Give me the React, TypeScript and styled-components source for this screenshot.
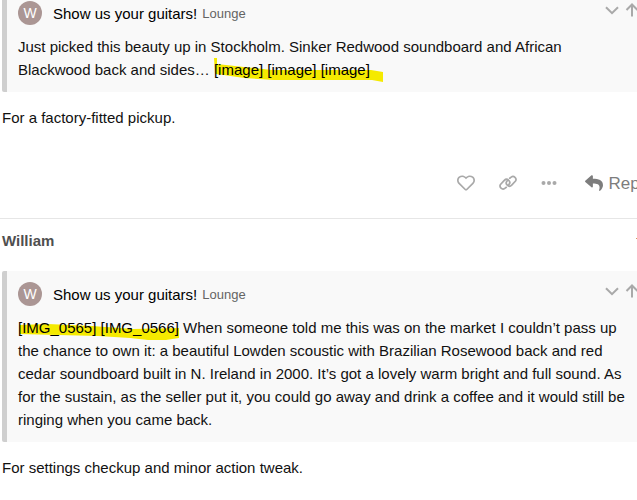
import React from "react";
import styled, { createGlobalStyle } from "styled-components";

const GlobalStyle = createGlobalStyle`
  * { box-sizing: border-box; }
  body {
    margin: 0;
    background: #fff;
    color: #111;
    font-family: "Liberation Sans", Arial, sans-serif;
    font-size: 15px;
    line-height: 23px;
    overflow: hidden;
  }
`;

const Stream = styled.main`
  padding-left: 2px;
  margin-top: -10px;
`;

const Post = styled.article<{ $divided?: boolean }>`
  border-top: ${(p) => (p.$divided ? "1px solid #e6e6e6" : "none")};
  padding-top: ${(p) => (p.$divided ? "10px" : "0")};
  margin-left: -2px;
  padding-left: 2px;
`;

const AuthorRow = styled.header`
  display: flex;
  justify-content: space-between;
  margin-bottom: 19px;
`;

const Author = styled.a`
  color: #4f4f4f;
  font-weight: bold;
  text-decoration: none;
`;

const EditMark = styled.span`
  width: 1px;
  height: 1px;
  margin-top: 9px;
  background: #d99a5b;
`;

const Quote = styled.aside`
  border-left: 5px solid #cfcfcf;
  border-radius: 2px 0 0 2px;
  background: #f9f9f9;
  padding: 11px 8px 11px 11px;
`;

const QuoteHeader = styled.div`
  display: flex;
  align-items: center;
  height: 24px;
  margin-bottom: 10px;
`;

const Avatar = styled.span`
  display: flex;
  align-items: center;
  justify-content: center;
  width: 24px;
  height: 24px;
  margin-right: 11px;
  border-radius: 50%;
  background: #ab9694;
  color: #fff;
  font-size: 14px;
`;

const Topic = styled.a`
  color: #000;
  text-decoration: none;
`;

const Category = styled.a`
  margin: 1px auto 0 5px;
  color: #646464;
  font-size: 13px;
  text-decoration: none;
`;

const QuoteControls = styled.div`
  display: flex;
  gap: 6px;
  margin: -6px -10px 0 0;
`;

const IconButton = styled.button`
  display: flex;
  align-items: center;
  border: 0;
  padding: 0;
  background: none;
  color: #a9a9a9;
  font: inherit;
`;

const QuoteBody = styled.blockquote`
  margin: 0;
`;

const Marked = styled.span`
  position: relative;
  z-index: 0;
  white-space: nowrap;
  color: #000;
`;

const Marker = styled.svg`
  position: absolute;
  left: 0;
  top: -4px;
  z-index: -1;
  overflow: visible;
  fill: #f5ea00;
`;

const Note = styled.p`
  margin: 14px 0;
`;

const Actions = styled.nav`
  display: flex;
  align-items: center;
  justify-content: flex-end;
  height: 32px;
  margin: 38px -15px 19px 0;

  button + button { margin-left: 24px; }
`;

const ReplyButton = styled(IconButton)`
  color: #7d7d7d;
  font-size: 17px;
  gap: 6px;

  && { margin-left: 28px; }
`;

const Chevron = () => (
  <svg width="14" height="14" viewBox="0 0 14 14" fill="none" stroke="currentColor" strokeWidth="2">
    <path d="M1 4.2 7 10.2 13 4.2" />
  </svg>
);

const ArrowUp = () => (
  <svg width="14" height="14" viewBox="0 0 14 14" fill="none" stroke="currentColor" strokeWidth="2">
    <path d="M7 13.5V1.5M1.5 7 7 1.5 12.5 7" />
  </svg>
);

const Heart = () => (
  <svg width="18" height="16" viewBox="0 20 512 472" preserveAspectRatio="none" fill="currentColor">
    <path d="M458.4 64.3C400.6 15.7 311.3 23 256 79.3 200.7 23 111.4 15.6 53.6 64.3-21.6 127.6-10.6 230.8 43 285.5l175.4 178.7c10 10.2 23.4 15.9 37.6 15.9 14.3 0 27.6-5.6 37.6-15.8L469 285.6c53.5-54.7 64.7-157.9-10.6-221.3zm-23.6 187.5L259.4 430.5c-2.4 2.4-4.4 2.4-6.8 0L77.2 251.8c-36.5-37.2-43.9-107.6 7.3-150.7 38.9-32.7 98.9-27.8 136.5 10.5l35 35.7 35-35.7c37.8-38.5 97.8-43.2 136.5-10.6 51.1 43.1 43.5 113.9 7.3 150.8z" />
  </svg>
);

const Link = () => (
  <svg width="18" height="16" viewBox="0 0 18 16" fill="none" stroke="currentColor" strokeWidth="1.7" strokeLinecap="round">
    <path d="M7.3 12.3 5.8 13.4A3 3 0 0 1 1.5 9.4L5.3 5.4A3.1 3.1 0 0 1 9.8 9.7L9.2 10.4" />
    <path d="M10.7 3.2 12.2 2.1A3 3 0 0 1 16.5 6.1L12.7 10.1A3.1 3.1 0 0 1 8.2 5.8L8.8 5.1" />
  </svg>
);

const Dots = () => (
  <svg width="16" height="16" viewBox="0 0 16 16" fill="currentColor">
    <circle cx="2.5" cy="8" r="2" />
    <circle cx="8" cy="8" r="2" />
    <circle cx="13.5" cy="8" r="2" />
  </svg>
);

const ReplyIcon = () => (
  <svg width="18" height="18" viewBox="0 0 512 512" fill="currentColor">
    <path d="M8.309 189.836L184.313 37.851C199.719 24.546 224 35.347 224 56.015v80.053c160.629 1.839 288 34.032 288 186.258 0 61.441-39.581 122.309-83.333 154.132-13.653 9.931-33.111-2.533-28.077-18.631 45.344-145.012-21.507-183.51-176.59-185.742V360c0 20.7-24.3 31.453-39.687 18.164l-176.004-152c-11.071-9.562-11.086-26.753 0-36.328z" />
  </svg>
);

function LoungeQuote({ children }: { children: React.ReactNode }) {
  return (
    <Quote>
      <QuoteHeader>
        <Avatar>W</Avatar>
        <Topic href="#topic">Show us your guitars!</Topic>
        <Category href="#lounge">Lounge</Category>
        <QuoteControls>
          <IconButton aria-label="Expand quote"><Chevron /></IconButton>
          <IconButton aria-label="Go to quoted post"><ArrowUp /></IconButton>
        </QuoteControls>
      </QuoteHeader>
      <QuoteBody>{children}</QuoteBody>
    </Quote>
  );
}

export default function App() {
  return (
    <>
      <GlobalStyle />
      <Stream>
        <Post>
          <LoungeQuote>
            Just picked this beauty up in Stockholm. Sinker Redwood soundboard and African
            Blackwood back and sides…{" "}
            <Marked>
              <Marker width="170" height="28" viewBox="0 0 170 28" aria-hidden="true">
                <path d="M0 1 3 1 3 7 30 10 58 13 110 13 157 13 169 15 169 25 158 23 120 23 60 23 30 21 10 18 1 17Z" />
              </Marker>
              [image] [image] [image]
            </Marked>
          </LoungeQuote>
          <Note>For a factory-fitted pickup.</Note>
          <Actions aria-label="Post actions">
            <IconButton aria-label="Like"><Heart /></IconButton>
            <IconButton aria-label="Copy link"><Link /></IconButton>
            <IconButton aria-label="More"><Dots /></IconButton>
            <ReplyButton><ReplyIcon />Reply</ReplyButton>
          </Actions>
        </Post>
        <Post $divided>
          <AuthorRow>
            <Author href="#william">William</Author>
            <EditMark />
          </AuthorRow>
          <LoungeQuote>
            <Marked>
              <Marker width="162" height="28" viewBox="0 0 162 28" aria-hidden="true">
                <path d="M1 10 30 9 74 11 115 14 161 13 161 23 148 25 130 25 112 23 80 21 40 20 1 19Z" />
              </Marker>
              [IMG_0565] [IMG_0566]
            </Marked>{" "}
            When someone told me this was on the market I couldn’t pass up the chance to own it: a
            beautiful Lowden scoustic with Brazilian Rosewood back and red cedar soundboard built in
            N. Ireland in 2000. It’s got a lovely warm bright and full sound. As for the sustain, as
            the seller put it, you could go away and drink a coffee and it would still be ringing
            when you came back.
          </LoungeQuote>
          <Note>For settings checkup and minor action tweak.</Note>
        </Post>
      </Stream>
    </>
  );
}
